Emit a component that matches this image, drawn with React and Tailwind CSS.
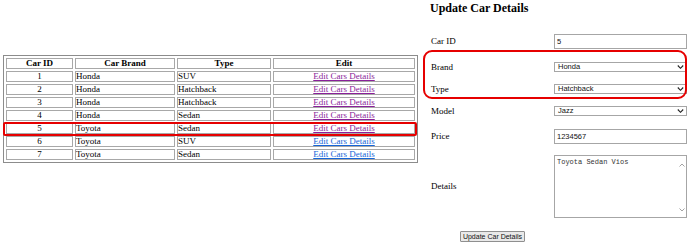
import React from "react";

const rows = [
  { id: 1, brand: "Honda", type: "SUV", visited: true },
  { id: 2, brand: "Honda", type: "Hatchback", visited: true },
  { id: 3, brand: "Honda", type: "Hatchback", visited: true },
  { id: 4, brand: "Honda", type: "Sedan", visited: true },
  { id: 5, brand: "Toyota", type: "Sedan", visited: true },
  { id: 6, brand: "Toyota", type: "SUV", visited: false },
  { id: 7, brand: "Toyota", type: "Sedan", visited: false },
];

const serif = "font-['Liberation_Serif','Times_New_Roman',serif]";
const sans = "font-['Liberation_Sans',Arial,sans-serif]";

function Chevron() {
  return (
    <svg width="7" height="5" viewBox="0 0 7 5" className="absolute right-[2px] top-1/2 -translate-y-1/2 pointer-events-none">
      <path d="M0.8 1 L3.5 3.8 L6.2 1" fill="none" stroke="#222" strokeWidth="1.1" />
    </svg>
  );
}

function Select({ value }) {
  return (
    <div
      role="combobox"
      className={`relative w-[133px] h-[10px] border border-[#a6a6a6] bg-white ${sans} text-[7.5px] leading-[8px] pl-[3px] text-[#111] flex items-center overflow-hidden`}
    >
      <span>{value}</span>
      <Chevron />
    </div>
  );
}

function FormRow({ label, h, children }) {
  return (
    <div className={`flex items-center ${h}`}>
      <div className={`w-[123px] ${serif} text-[9px] leading-[10px] text-black`}>{label}</div>
      {children}
    </div>
  );
}

export default function App() {
  const cell = "border border-[#a8a8a8] p-0 text-[9px] leading-[9px] h-[11px] whitespace-nowrap";
  return (
    <div className={`relative w-[690px] h-[245px] overflow-hidden bg-white flex ${serif}`}>
      {/* Left: table */}
      <div className="w-[420px] pt-[55px] pl-[3px]">
        <table className="table-fixed w-[415px] border-separate border-spacing-[2px] border border-[#8c8c8c]">
          <thead>
            <tr>
              <th className={`${cell} w-[67px] text-center font-bold`}>Car ID</th>
              <th className={`${cell} w-[100px] text-center font-bold`}>Car Brand</th>
              <th className={`${cell} w-[94px] text-center font-bold`}>Type</th>
              <th className={`${cell} text-center font-bold`}>Edit</th>
            </tr>
          </thead>
          <tbody>
            {rows.map((r) => (
              <tr key={r.id}>
                <td className={`${cell} text-center`}>{r.id}</td>
                <td className={`${cell} text-left`}>{r.brand}</td>
                <td className={`${cell} text-left`}>{r.type}</td>
                <td className={`${cell} text-center`}>
                  <a
                    href="#"
                    className={`underline ${r.visited ? "text-[#8a1f9a]" : "text-[#1565d8]"}`}
                  >
                    Edit Cars Details
                  </a>
                </td>
              </tr>
            ))}
          </tbody>
        </table>
      </div>

      {/* Right: form */}
      <div className="flex-1 pl-[11px]">
        <h2 className={`${serif} font-bold text-[12px] leading-[14px] h-[29px] pt-[1px] -ml-[1px] text-black`}>
          Update Car Details
        </h2>
        <FormRow label="Car ID" h="h-[24px]">
          <input
            defaultValue="5"
            className={`w-[133px] h-[15px] border border-[#a6a6a6] ${sans} text-[7.5px] pl-[2px] outline-none text-[#111]`}
          />
        </FormRow>
        <FormRow label="Brand" h="h-[28px]">
          <Select value="Honda" />
        </FormRow>
        <FormRow label="Type" h="h-[16px]">
          <Select value="Hatchback" />
        </FormRow>
        <FormRow label="Model" h="h-[28px]">
          <Select value="Jazz" />
        </FormRow>
        <FormRow label="Price" h="h-[22px]">
          <input
            defaultValue="1234567"
            className={`w-[133px] h-[15px] border border-[#a6a6a6] ${sans} text-[7.5px] pl-[2px] outline-none text-[#111]`}
          />
        </FormRow>
        <FormRow label="Details" h="h-[78px]">
          <div className="relative w-[133px] h-[63px]">
            <textarea
              readOnly
              defaultValue="Toyota Sedan Vios"
              className="w-full h-full resize-none overflow-hidden border border-[#a6a6a6] font-['Liberation_Mono','Courier_New',monospace] text-[7px] leading-[8px] pl-[2px] pt-[2px] outline-none text-[#333]"
            />
            <svg width="6" height="4" viewBox="0 0 6 4" className="absolute right-[2px] top-[8px] pointer-events-none">
              <path d="M0.5 3.5 L3 1 L5.5 3.5" fill="none" stroke="#999" strokeWidth="0.9" />
            </svg>
            <svg width="6" height="4" viewBox="0 0 6 4" className="absolute right-[2px] bottom-[6px] pointer-events-none">
              <path d="M0.5 0.5 L3 3 L5.5 0.5" fill="none" stroke="#999" strokeWidth="0.9" />
            </svg>
          </div>
        </FormRow>
        <div className="h-[22px] flex items-center pl-[29px]">
          <button
            className={`h-[11px] w-[65px] border border-[#8f8f8f] bg-[#e9e9e9] rounded-[1px] ${sans} text-[7px] leading-[9px] text-[#111] p-0`}
          >
            Update Car Details
          </button>
        </div>
      </div>

      {/* Annotation highlights */}
      <div className="absolute left-[3px] top-[122px] w-[414px] h-[14px] border-[2.5px] border-[#e60000] rounded-[2px] pointer-events-none" />
      <div className="absolute left-[423px] top-[50px] w-[264px] h-[49px] border-[2.5px] border-[#e60000] rounded-[9px] pointer-events-none" />
    </div>
  );
}
